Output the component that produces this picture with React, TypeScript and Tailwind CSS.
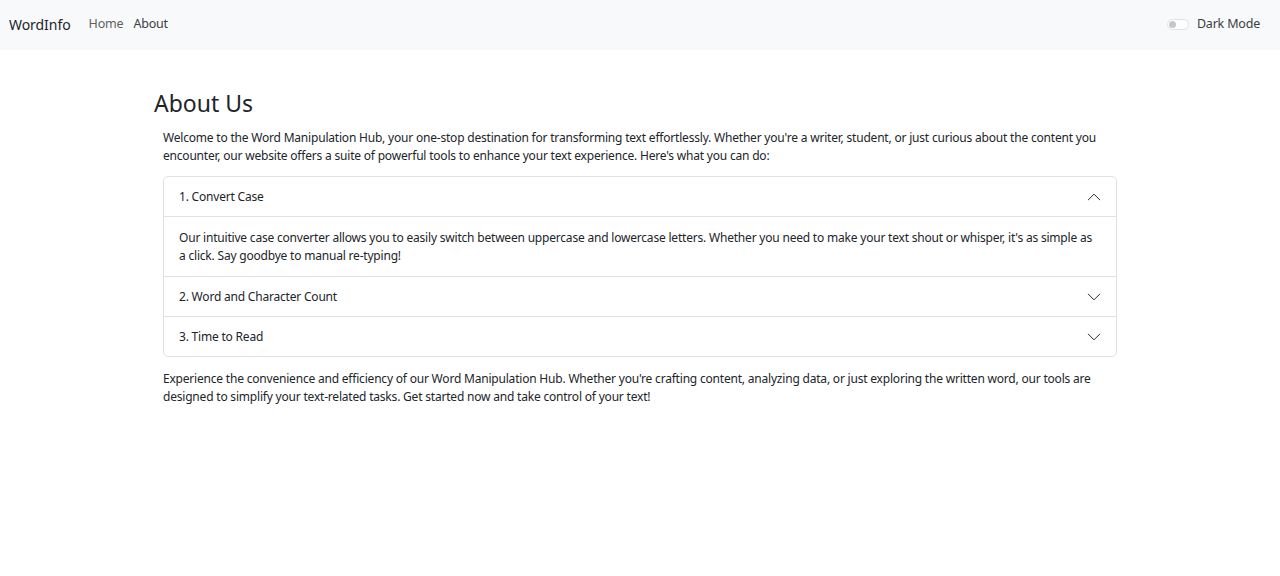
import React, { useState } from "react";

const items = [
  {
    title: "1. Convert Case",
    body: "Our intuitive case converter allows you to easily switch between uppercase and lowercase letters. Whether you need to make your text shout or whisper, it's as simple as a click. Say goodbye to manual re-typing!",
  },
  {
    title: "2. Word and Character Count",
    body: "Quickly count the number of words and characters in your text. Perfect for meeting essay limits or keeping your posts concise.",
  },
  {
    title: "3. Time to Read",
    body: "Get an estimate of how long it takes to read your text, so you can plan your content accordingly.",
  },
];

function Chevron({ up }: { up: boolean }) {
  return (
    <svg width="14" height="14" viewBox="0 0 16 16" fill="none" stroke="#212529" strokeWidth="1.1" className={up ? "rotate-180" : ""}>
      <path d="M1.5 4.75l6.5 6.5 6.5-6.5" strokeLinecap="round" strokeLinejoin="round" />
    </svg>
  );
}

export default function App() {
  const [open, setOpen] = useState<number | null>(0);

  return (
    <div className="min-h-screen bg-white text-[#212529]" style={{ fontFamily: '"Noto Sans", "Open Sans", sans-serif' }}>
      <nav className="flex items-center justify-between h-[50px] bg-[#f8f9fa] pl-[9px] pr-[20px] pb-[2px]">
        <div className="flex items-center">
          <span className="text-[14px] tracking-[-0.05px] mr-[18px]">WordInfo</span>
          <a className="text-[12.5px] tracking-[-0.2px] text-[#5c5f62] mr-[10px]">Home</a>
          <a className="text-[12.5px] tracking-[-0.2px] text-[#3d4043]">About</a>
        </div>
        <div className="flex items-center">
          <span className="relative w-[22px] h-[11px] rounded-full border border-[#dee2e6] bg-white mr-[8px]">
            <span className="absolute left-[1px] top-[1px] w-[7px] h-[7px] rounded-full bg-[#c4c8cc]" />
          </span>
          <span className="text-[12.5px] tracking-[-0.2px] text-[#3d4043]">Dark Mode</span>
        </div>
      </nav>

      <main className="w-[972px] mx-auto pt-[38px]">
        <h1 className="text-[23px] leading-[30px] mb-[11px]">About Us</h1>
        <div className="px-[9px] text-[12px] tracking-[-0.2px] leading-[18px]">
          <p className="mb-[11px]">
            Welcome to the Word Manipulation Hub, your one-stop destination for transforming text effortlessly. Whether you're a writer, student, or just curious about the content you encounter, our website offers a suite of powerful tools to enhance your text experience. Here's what you can do:
          </p>
          <div className="border border-[#dee2e6] rounded-[5px]">
            {items.map((it, i) => (
              <div key={i} className={i > 0 ? "border-t border-[#dee2e6]" : ""}>
                <button
                  onClick={() => setOpen(open === i ? null : i)}
                  className="w-full h-[39px] flex items-center justify-between pl-[15px] pr-[15px] text-left"
                >
                  <span>{it.title}</span>
                  <Chevron up={open === i} />
                </button>
                {open === i && (
                  <div className="border-t border-[#dee2e6] px-[15px] pt-[12px] pb-[11px]">
                    {it.body}
                  </div>
                )}
              </div>
            ))}
          </div>
          <p className="mt-[13px]">
            Experience the convenience and efficiency of our Word Manipulation Hub. Whether you're crafting content, analyzing data, or just exploring the written word, our tools are designed to simplify your text-related tasks. Get started now and take control of your text!
          </p>
        </div>
      </main>
    </div>
  );
}
